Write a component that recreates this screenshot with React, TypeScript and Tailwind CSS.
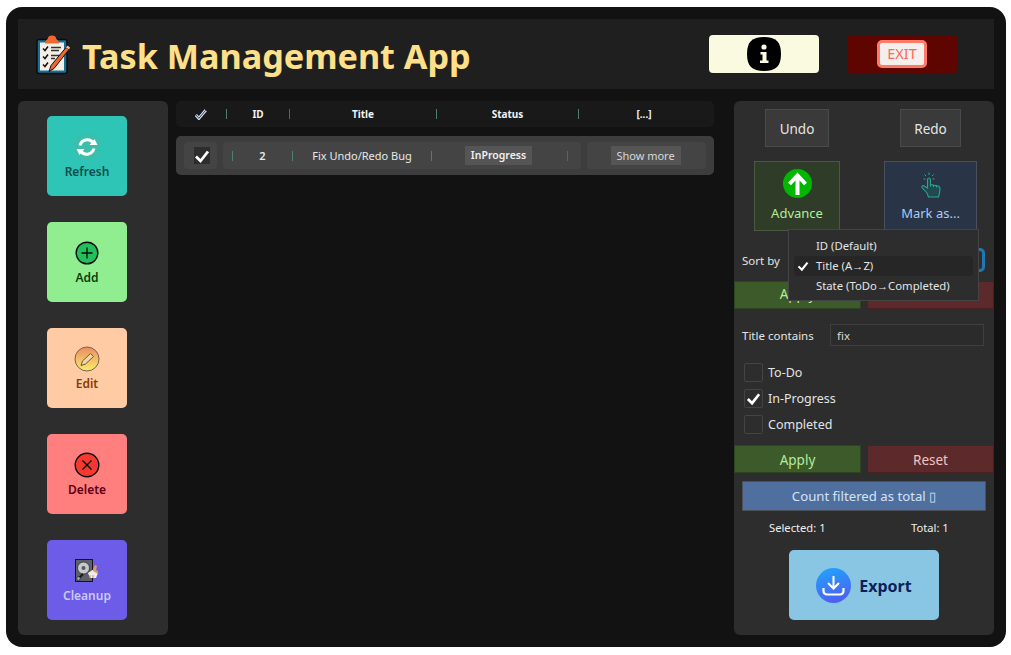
import React from "react";

const font = { fontFamily: '"Noto Sans", "Open Sans", sans-serif' };

const Sep = ({ red }: { red?: boolean }) => (
  <span className={`block w-px h-[10px] shrink-0 ${red ? "bg-[#7d5258]" : "bg-[#4e7d72]"}`}></span>
);

const Arrow = () => <span className="font-['Liberation_Sans']">→</span>;

const ClipboardIcon = () => (
  <svg width="34" height="41" viewBox="0 0 34 40">
    <rect x="1" y="5" width="30" height="34" rx="2" fill="#1b6f96" stroke="#0b0b0b" strokeWidth="1.5" />
    <rect x="4" y="8" width="24" height="28" fill="#f4efe6" />
    <path d="M10 6 L12 4 Q12 1 16 1 Q20 1 20 4 L22 6 L23 9 H9 Z" fill="#f0672f" />
    <path d="M7 14l2 2 3-4M7 22l2 2 3-4M7 30l2 2 3-4" fill="none" stroke="#111" strokeWidth="1.5" />
    <path d="M15 13h10M15 16h8M15 21h10M15 24h4" stroke="#333" strokeWidth="1.6" />
    <path d="M13 37 L15 31 L30 13 L33 15 L18 34 Z" fill="#f0672f" stroke="#111" strokeWidth="1" />
    <path d="M30 13 L31.5 11 L34 13 L33 15 Z" fill="#eec39a" />
  </svg>
);

const InfoIcon = () => (
  <svg width="34" height="34" viewBox="0 0 34 34">
    <path d="M17 0 C29 0 34 5 34 17 C34 29 29 34 17 34 C5 34 0 29 0 17 C0 5 5 0 17 0 Z" fill="#000" />
    <circle cx="17" cy="10" r="2.6" fill="#fafae0" />
    <path d="M13.5 15 H19.5 V23.5 H21.5 V26 H13 V23.5 H15.5 V17.5 H13.5 Z" fill="#fafae0" />
  </svg>
);

const RefreshIcon = () => (
  <svg width="26" height="26" viewBox="0 0 26 26">
    <circle cx="13" cy="13" r="13" fill="#3dbdaa" />
    <path d="M6 11.5 A7.5 7.5 0 0 1 19 8.5" fill="none" stroke="#fff" strokeWidth="3" />
    <path d="M15.5 11 H23.5 L20.5 5 Z" fill="#fff" />
    <path d="M20 14.5 A7.5 7.5 0 0 1 7 17.5" fill="none" stroke="#fff" strokeWidth="3" />
    <path d="M10.5 15 H2.5 L5.5 21 Z" fill="#fff" />
  </svg>
);

const AddIcon = () => (
  <svg width="24" height="24" viewBox="0 0 24 24">
    <circle cx="12" cy="12" r="10.8" fill="#22c05c" stroke="#0a0a0a" strokeWidth="1.4" />
    <path d="M12 6.5v11M6.5 12h11" stroke="#0a0a0a" strokeWidth="1.3" />
  </svg>
);

const EditIcon = () => (
  <svg width="26" height="26" viewBox="0 0 26 26">
    <defs>
      <linearGradient id="editFill" x1="0" y1="0" x2="0" y2="1">
        <stop offset="0" stopColor="#ec8b63" />
        <stop offset="1" stopColor="#f7ee6a" />
      </linearGradient>
    </defs>
    <circle cx="13" cy="13" r="12" fill="url(#editFill)" stroke="#7a6248" strokeWidth="1" />
    <path d="M7 19.5 L8.5 15 L16.5 7.5 L19.5 10.5 L11.5 18 Z" fill="#f1d6a8" stroke="#6f5640" strokeWidth="1" />
  </svg>
);

const DeleteIcon = () => (
  <svg width="26" height="26" viewBox="0 0 26 26">
    <circle cx="13" cy="13" r="11.8" fill="#f5392f" stroke="#0a0a0a" strokeWidth="1.4" />
    <path d="M8.5 8.5l9 9M17.5 8.5l-9 9" stroke="#0a0a0a" strokeWidth="1.4" />
  </svg>
);

const CleanupIcon = () => (
  <svg width="24" height="24" viewBox="0 0 24 24">
    <rect x="0.5" y="0.5" width="17" height="22" fill="#5d6068" stroke="#151515" />
    <circle cx="8.5" cy="9" r="6" fill="#c6c8cc" stroke="#26282c" strokeWidth="0.7" />
    <circle cx="8.5" cy="9" r="2" fill="#55585e" />
    <path d="M3 20 L8 15" stroke="#1a1a1a" strokeWidth="2.2" />
    <circle cx="3.5" cy="19.5" r="1.8" fill="#a6a8ac" stroke="#151515" strokeWidth="0.5" />
    <path d="M13 14 L19 10 L23 14 L21 19 L15 19 Z" fill="#f1ede4" />
    <path d="M18 10 L20 6 L22 7 L21 11 L23 12 L23 15 L18 12 Z" fill="#d89a6a" />
    <path d="M15 19v-3M18 19v-3" stroke="#b58a4c" strokeWidth="0.8" />
  </svg>
);

const AdvanceIcon = () => (
  <svg width="29" height="29" viewBox="0 0 29 29">
    <circle cx="14.5" cy="14.5" r="14.5" fill="#00b800" />
    <path d="M14.5 26 V8 M6.5 15 L14.5 6.5 L22.5 15" fill="none" stroke="#fff" strokeWidth="4" />
  </svg>
);

const PointIcon = () => (
  <svg width="20" height="26" viewBox="0 0 20 26" fill="none" stroke="#2fa38c" strokeWidth="1.1">
    <path d="M6 21 L1 15.5 Q0.5 13.5 2.5 13.5 L6.5 16 V8 Q6.5 6 8 6 Q9.5 6 9.5 8 V12.5 L17 14 Q19 14.5 19 16.5 L18.5 21 L17.5 25 H7.5 Z" fill="#1f4a50" />
    <path d="M9.5 12.5 V14.5 M12.5 13 V15 M15.5 13.6 V15.6" />
    <path d="M8 0.5 V3 M3.5 2.5 L5 4 M12.5 2.5 L11 4 M2.5 7 H4.5 M13.5 7 H11.5" strokeWidth="1" />
  </svg>
);

const ExportIcon = () => (
  <svg width="35" height="35" viewBox="0 0 35 35">
    <defs>
      <linearGradient id="exportFill" x1="0" y1="0" x2="0.3" y2="1">
        <stop offset="0" stopColor="#1ea7fd" />
        <stop offset="1" stopColor="#4a63f5" />
      </linearGradient>
    </defs>
    <circle cx="17.5" cy="17.5" r="17.5" fill="url(#exportFill)" />
    <path d="M17.5 8 V20 M12 15 L17.5 20.5 L23 15" fill="none" stroke="#fff" strokeWidth="2" />
    <path d="M7.5 20 V22.5 Q7.5 26.5 11.5 26.5 H23.5 Q27.5 26.5 27.5 22.5 V20" fill="none" stroke="#fff" strokeWidth="2.2" />
  </svg>
);

const Check = ({ size = 16 }: { size?: number }) => (
  <svg width={size} height={size} viewBox="0 0 16 16">
    <path d="M2 8.5 L6.5 13 L14 3.5" fill="none" stroke="#fff" strokeWidth="2.8" />
  </svg>
);

const tools = [
  { label: "Refresh", bg: "bg-[#2ec4b6]", text: "text-[#0f4d4e]", icon: <RefreshIcon /> },
  { label: "Add", bg: "bg-[#90ee90]", text: "text-[#0f3d0f]", icon: <AddIcon /> },
  { label: "Edit", bg: "bg-[#ffcba4]", text: "text-[#8b3a00]", icon: <EditIcon /> },
  { label: "Delete", bg: "bg-[#ff7f7f]", text: "text-[#5c0011]", icon: <DeleteIcon /> },
  { label: "Cleanup", bg: "bg-[#6c5ce7]", text: "text-[#cdc8fa]", icon: <CleanupIcon /> },
];

const ActionRow = ({ pad }: { pad: string }) => (
  <div className="flex justify-between">
    <button className={`w-[127px] h-[28px] ${pad} bg-[#3d5a2a] border border-[#2c4520] text-[13.5px] text-[#b5ec9a]`}>Apply</button>
    <button className={`w-[127px] h-[28px] ${pad} bg-[#5c2a2a] border border-[#4c2020] text-[13.5px] text-[#f0c4c0]`}>Reset</button>
  </div>
);

const FilterBox = ({ label, checked }: { label: string; checked?: boolean }) => (
  <div className="flex items-center gap-[5px] h-[19px] pl-[10px]">
    <span className="flex items-center justify-center w-[19px] h-[19px] rounded-[2px] border border-[#444] bg-[#2d2d2d]">
      {checked && <Check size={15} />}
    </span>
    <span className="pt-[1px] text-[12.5px] text-[#e4e4e4]">{label}</span>
  </div>
);

export default function App() {
  return (
    <div className="w-[1011px] h-[655px] bg-white pt-[7px] pl-[6px] overflow-hidden" style={font}>
      <div className="w-[1000px] h-[640px] bg-[#121212] rounded-[16px] pt-[12px] pl-[12px]">
        {/* Header */}
        <div className="flex items-center w-[976px] h-[70px] bg-[#1f1f1f] pl-[18px]">
          <ClipboardIcon />
          <h1 className="ml-[12px] pt-[4px] w-[627px] text-[34.2px] font-bold text-[#ffe08a] whitespace-nowrap">
            Task Management App
          </h1>
          <button className="flex items-center justify-center w-[110px] h-[38px] rounded-[4px] bg-[#fafae0]">
            <InfoIcon />
          </button>
          <button className="flex items-center justify-center ml-[28px] w-[110px] h-[38px] rounded-[4px] bg-[#5e0500]">
            <span className="flex items-center justify-center w-[50px] h-[28px] rounded-[5px] border-[3px] border-[#ff7a66] bg-[#f4efec] text-[14.5px] text-[#fb6a58]">
              EXIT
            </span>
          </button>
        </div>

        <div className="flex mt-[12px] h-[534px]">
          {/* Tool bar */}
          <div className="flex flex-col gap-[26px] w-[150px] pt-[15px] pl-[29px] rounded-[6px] bg-[#2d2d2d]">
            {tools.map((t) => (
              <button
                key={t.label}
                className={`flex flex-col items-center justify-center gap-[2px] w-[80px] h-[80px] pt-[2px] rounded-[5px] ${t.bg}`}
              >
                <span className="flex items-center justify-center h-[28px]">{t.icon}</span>
                <span className={`text-[12px] font-semibold ${t.text}`}>{t.label}</span>
              </button>
            ))}
          </div>

          {/* Task table */}
          <div className="ml-[8px] w-[538px]">
            <div className="flex items-center h-[26px] rounded-[5px] bg-[#191919] text-[10px] font-bold text-[#f2f2f2]">
              <div className="flex items-center justify-center w-[50px]">
                <svg width="12" height="11" viewBox="0 0 14 12" fill="none">
                  <path d="M1 6.5 L4.5 10.5 L12.5 1" stroke="#cfe4ff" strokeWidth="3.4" />
                  <path d="M1 6.5 L4.5 10.5 L12.5 1" stroke="#222" strokeWidth="1" />
                </svg>
              </div>
              <Sep />
              <div className="w-[62px] text-center">ID</div>
              <Sep red />
              <div className="w-[146px] text-center">Title</div>
              <Sep />
              <div className="w-[141px] text-center">Status</div>
              <Sep />
              <div className="w-[130px] text-center">[...]</div>
            </div>

            <div className="flex items-center gap-[6px] h-[39px] mt-[9px] pl-[8px] rounded-[5px] bg-[#3d3d3d] text-[11px]">
              <div className="flex items-center justify-center w-[33px] h-[27px] pl-[2px] rounded-[4px] bg-[#444]">
                <span className="flex items-center justify-center w-[16px] h-[17px] bg-[#2d2d2d]">
                  <Check size={16} />
                </span>
              </div>
              <div className="flex items-center w-[358px] h-[27px] pl-[9px] rounded-[4px] bg-[#444] text-[#e8e8e8]">
                <Sep />
                <div className="w-[59px] pt-[1px] text-center font-semibold">2</div>
                <Sep />
                <div className="w-[138px] pt-[1px] text-center whitespace-nowrap">Fix Undo/Redo Bug</div>
                <Sep />
                <div className="flex justify-center w-[135px] pr-[2px]">
                  <span className="flex items-center justify-center w-[67px] h-[19px] pt-[1px] bg-[#555] text-[10.5px] font-semibold text-[#f0f0f0]">
                    InProgress
                  </span>
                </div>
                <Sep red />
              </div>
              <div className="flex items-center justify-center w-[119px] h-[27px] pr-[2px] rounded-[4px] bg-[#444]">
                <button className="w-[70px] h-[19px] pt-[1px] bg-[#555] text-[#d8d8d8] whitespace-nowrap">Show more</button>
              </div>
            </div>
          </div>

          {/* Side controls */}
          <div className="relative ml-[20px] w-[260px] rounded-[6px] bg-[#2d2d2d] pt-[8px]">
            <div className="flex pl-[31px]">
              <button className="w-[64px] h-[38px] pt-[2px] bg-[#3a3a3a] border border-[#4a4a4a] text-[13.5px] text-[#e4e4e4]">Undo</button>
              <button className="ml-[71px] w-[61px] h-[38px] pt-[2px] bg-[#3a3a3a] border border-[#4a4a4a] text-[13.5px] text-[#e4e4e4]">Redo</button>
            </div>
            <div className="flex pl-[20px] mt-[14px]">
              <button className="flex flex-col items-center justify-center gap-[6px] w-[86px] h-[70px] pt-[1px] bg-[#2f3d28] border border-[#4a5a42] text-[13px] text-[#b5ec9a]">
                <AdvanceIcon />
                <span>Advance</span>
              </button>
              <button className="flex flex-col items-center justify-center gap-[6px] ml-[44px] w-[93px] h-[70px] pt-[3px] bg-[#2a3447] border border-[#48505e] text-[13px] text-[#a6cdf2]">
                <PointIcon />
                <span>Mark as...</span>
              </button>
            </div>

            <div className="flex items-center h-[24px] mt-[17px] pl-[8px] pr-[9px] justify-between">
              <span className="pt-[1px] text-[11.5px] text-[#e4e4e4]">Sort by</span>
              <span className="w-[30px] h-[24px] rounded-[5px] border-[3px] border-[#1f78b4]"></span>
            </div>
            <div className="mt-[9px]">
              <ActionRow pad="pb-[1px]" />
            </div>

            <div className="flex items-center mt-[15px] pl-[8px]">
              <span className="w-[88px] pt-[1px] text-[11.5px] text-[#e4e4e4]">Title contains</span>
              <div className="flex items-center w-[154px] h-[22px] pl-[6px] pt-[1px] border border-[#3f3f3f] bg-[#2b2b2b] text-[11.5px] text-[#d8d8d8]">
                fix
              </div>
            </div>

            <div className="flex flex-col gap-[7px] mt-[17px]">
              <FilterBox label="To-Do" />
              <FilterBox label="In-Progress" checked />
              <FilterBox label="Completed" />
            </div>

            <div className="mt-[11px]">
              <ActionRow pad="pt-[2px]" />
            </div>

            <div className="flex items-center justify-center ml-[8px] mt-[8px] w-[244px] h-[30px] pt-[2px] bg-[#4f6f9f] border border-[#4a4f5a] text-[13.2px] text-[#d4e2f7]">
              Count filtered as total ▯
            </div>

            <div className="flex mt-[9px] pl-[35px] text-[11.2px] text-[#f0f0f0]">
              <span className="w-[142px]">Selected: 1</span>
              <span>Total: 1</span>
            </div>

            <div className="flex justify-center mt-[13px]">
              <button className="flex items-center justify-center gap-[8px] w-[150px] h-[70px] pt-[2px] rounded-[5px] bg-[#89c6e4] text-[16px] font-bold text-[#0d1f5c]">
                <ExportIcon />
                Export
              </button>
            </div>

            {/* Open sort popup */}
            <div className="absolute left-[54px] top-[128px] w-[191px] h-[72px] pt-[6px] px-[5px] border border-[#444] bg-[#2d2d2d] text-[11.3px] text-[#e4e4e4]">
              <div className="flex items-center h-[20px] pl-[22px]">ID (Default)</div>
              <div className="relative flex items-center h-[20px] pl-[22px] rounded-[4px] bg-[#262626]">
                <span className="absolute left-[3px] top-[4px]">
                  <Check size={12} />
                </span>
                <span>Title (A<Arrow />Z)</span>
              </div>
              <div className="flex items-center h-[20px] pl-[22px] whitespace-nowrap">
                <span>State (ToDo<Arrow />Completed)</span>
              </div>
            </div>
          </div>
        </div>
      </div>
    </div>
  );
}
